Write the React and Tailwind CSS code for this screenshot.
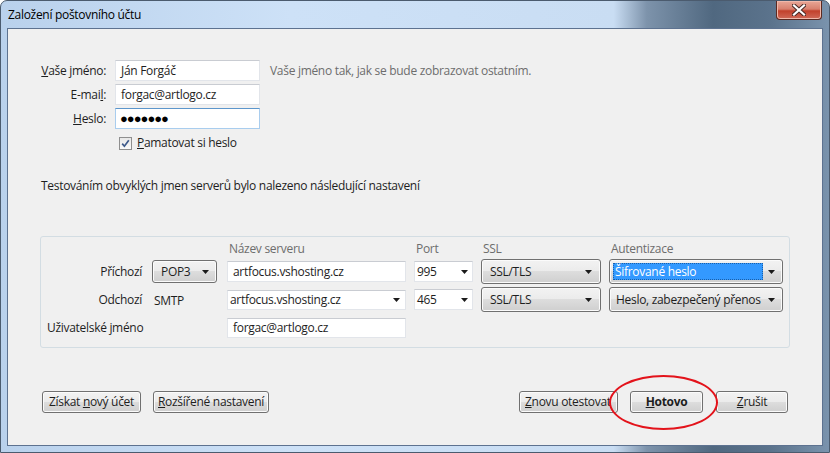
import React from "react";

const Arrow = () => (
  <svg width="7" height="4" viewBox="0 0 7 4" className="shrink-0">
    <path d="M0 0h7L3.5 4z" fill="#1b1b1b" />
  </svg>
);

function Btn({ children, className = "" }) {
  return (
    <div
      className={`h-[22px] flex items-center justify-center rounded-[3px] border border-[#707070] bg-[linear-gradient(#f2f2f2_0%,#ebebeb_50%,#dddddd_50%,#cfcfcf_100%)] shadow-[inset_0_0_0_1px_#fbfbfb] whitespace-nowrap overflow-hidden ${className}`}
    >
      <span>{children}</span>
    </div>
  );
}

function Dropdown({ children, className = "" }) {
  return (
    <div
      className={`flex items-center rounded-[3px] border border-[#707070] bg-[linear-gradient(#f2f2f2_0%,#ebebeb_50%,#dddddd_50%,#cfcfcf_100%)] shadow-[inset_0_0_0_1px_#fbfbfb] whitespace-nowrap ${className}`}
    >
      {children}
    </div>
  );
}

function Field({ children, className = "" }) {
  return (
    <div
      className={`flex items-center bg-white border border-[#e2e5ea] border-t-[#c9ccd2] whitespace-nowrap ${className}`}
    >
      {children}
    </div>
  );
}

const cols = "grid grid-cols-[111px_75px_187px_67px_128px_174px] items-center";

export default function App() {
  return (
    <div className="relative w-[830px] h-[453px] flex flex-col overflow-hidden rounded-t-[7px] border border-[#4b5b6e] bg-[linear-gradient(90deg,#b9d1ec_0%,#cde1f7_35%,#c9ddf3_74%,#7d93ab_78%,#506880_86%,#5b738c_93%,#7a93ad_100%)] font-['Open_Sans',sans-serif] text-[12px] tracking-[-0.3px] text-[#1e1e1e]">
      {/* title bar */}
      <div className="h-[27px] flex items-start">
        <span className="pl-[7px] pt-[6px] leading-[16px] text-black">Založení poštovního účtu</span>
        <div className="ml-auto mr-[7px] w-[46px] h-[19px] flex items-center justify-center rounded-b-[4px] border border-t-0 border-[#5b2a22] bg-[linear-gradient(#e9a797_0%,#d8806e_45%,#c2412c_55%,#d06a58_100%)] shadow-[inset_0_0_0_1px_#f0b8aa]">
          <svg width="14" height="12" viewBox="0 0 14 12">
            <path d="M2 1.5l10 9M12 1.5l-10 9" stroke="#4a2a25" strokeWidth="4.2" strokeLinecap="square" />
            <path d="M2 1.5l10 9M12 1.5l-10 9" stroke="#ffffff" strokeWidth="2.2" strokeLinecap="square" />
          </svg>
        </div>
      </div>

      {/* client area */}
      <div className="flex-1 mx-[6px] mb-[6px] border border-[#5d7290] bg-[#f0f0f0] flex flex-col">
        {/* account form */}
        <div className="pt-[31px] flex flex-col gap-[3px]">
          <div className="h-[21px] flex items-center">
            <span className="w-[98px] text-right">
              <span className="underline">V</span>aše jméno:
            </span>
            <Field className="ml-[9px] w-[145px] h-[21px] px-[5px]">Ján Forgáč</Field>
            <span className="ml-[10px] text-[#6d6d6d]">Vaše jméno tak, jak se bude zobrazovat ostatním.</span>
          </div>
          <div className="h-[21px] flex items-center">
            <span className="w-[98px] text-right">
              E-mai<span className="underline">l</span>:
            </span>
            <Field className="ml-[9px] w-[145px] h-[21px] px-[5px]">forgac@artlogo.cz</Field>
          </div>
          <div className="h-[21px] flex items-center">
            <span className="w-[98px] text-right">
              <span className="underline">H</span>eslo:
            </span>
            <div className="ml-[9px] w-[145px] h-[21px] px-[4px] flex items-center bg-white border border-[#a9cdee] border-t-[#5c96cc] text-[13px] tracking-[-1px] text-black">
              ●●●●●●●
            </div>
          </div>
          <div className="mt-[3px] h-[16px] flex items-center pl-[111px]">
            <div className="w-[13px] h-[13px] border border-[#8f8f8f] bg-[linear-gradient(#e8e8e8,#fafafa)] flex items-center justify-center">
              <svg width="9" height="9" viewBox="0 0 9 9">
                <path d="M1.2 4.6l2.2 2.6L7.8 1.2" stroke="#3f5b8c" strokeWidth="1.7" fill="none" />
              </svg>
            </div>
            <span className="ml-[5px]">
              <span className="underline">P</span>amatovat si heslo
            </span>
          </div>
        </div>

        <div className="mt-[27px] pl-[33px] leading-[16px]">
          Testováním obvyklých jmen serverů bylo nalezeno následující nastavení
        </div>

        {/* server settings group */}
        <div className="mt-[42px] ml-[32px] w-[750px] h-[112px] rounded-[3px] border border-[#d3dde3] pt-[3px] flex flex-col gap-[3px]">
          <div className={`h-[16px] ${cols} text-[#6d6d6d]`}>
            <span />
            <span />
            <span className="pl-[2px]">Název serveru</span>
            <span className="pl-[2px]">Port</span>
            <span className="pl-[2px]">SSL</span>
            <span className="pl-[2px]">Autentizace</span>
          </div>

          <div className={`h-[25px] ${cols}`}>
            <span className="text-right pr-[10px]">Příchozí</span>
            <Dropdown className="w-[65px] h-[23px] pl-[8px] pr-[7px] justify-between">
              POP3
              <Arrow />
            </Dropdown>
            <Field className="w-[179px] h-[21px] pl-[5px]">artfocus.vshosting.cz</Field>
            <Field className="w-[59px] h-[21px] pl-[2px] pr-[4px] justify-between">
              995
              <Arrow />
            </Field>
            <Dropdown className="w-[120px] h-[25px] pl-[8px] pr-[8px] justify-between">
              SSL/TLS
              <Arrow />
            </Dropdown>
            <Dropdown className="w-[174px] h-[25px] pl-[3px] pr-[7px] justify-between">
              <span className="w-[150px] h-[17px] flex items-center bg-[#3399ff] text-white pl-[1px] border border-dotted border-[#1a5fa8]">
                Šifrované heslo
              </span>
              <Arrow />
            </Dropdown>
          </div>

          <div className={`h-[25px] ${cols}`}>
            <span className="text-right pr-[10px]">Odchozí</span>
            <span className="pl-[2px] pt-[2px]">SMTP</span>
            <Field className="w-[179px] h-[20px] pl-[2px] pr-[5px] justify-between">
              artfocus.vshosting.cz
              <Arrow />
            </Field>
            <Field className="w-[59px] h-[21px] pl-[2px] pr-[4px] justify-between">
              465
              <Arrow />
            </Field>
            <Dropdown className="w-[120px] h-[25px] pl-[8px] pr-[8px] justify-between">
              SSL/TLS
              <Arrow />
            </Dropdown>
            <Dropdown className="w-[174px] h-[25px] pl-[6px] pr-[7px] justify-between">
              Heslo, zabezpečený přenos
              <Arrow />
            </Dropdown>
          </div>

          <div className={`h-[25px] ${cols}`}>
            <span className="col-span-2 pl-[6px]">Uživatelské jméno</span>
            <Field className="w-[179px] h-[20px] pl-[5px]">forgac@artlogo.cz</Field>
          </div>
        </div>

        {/* bottom buttons */}
        <div className="mt-[43px] flex items-center px-[34px]">
          <Btn className="w-[99px]">
            Získat <span className="underline">n</span>ový účet
          </Btn>
          <Btn className="ml-[12px] w-[116px]">
            <span className="underline">R</span>ozšířené nastavení
          </Btn>
          <Btn className="ml-auto w-[99px] justify-start pl-[5px]">
            <span className="underline">Z</span>novu otestovat
          </Btn>
          <Btn className="ml-[12px] w-[73px] font-bold">
            <span className="underline">H</span>otovo
          </Btn>
          <Btn className="ml-[13px] w-[72px]">
            <span className="underline">Z</span>rušit
          </Btn>
        </div>
      </div>

      {/* red annotation ellipse */}
      <div className="absolute left-[608px] top-[374px] w-[109px] h-[55px] rounded-[50%] border-[2px] border-[#e3131b]" />
    </div>
  );
}
